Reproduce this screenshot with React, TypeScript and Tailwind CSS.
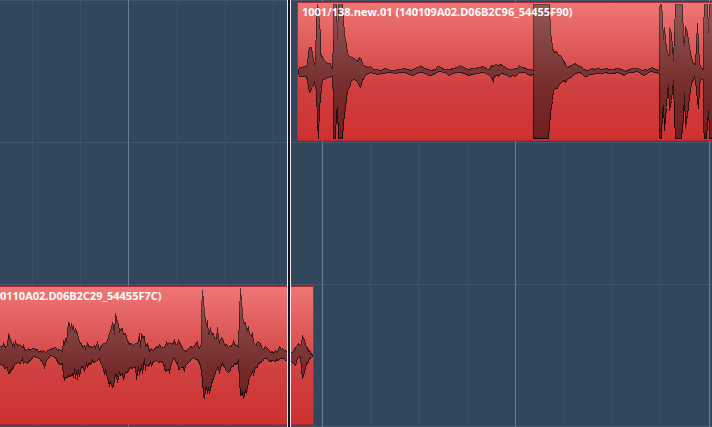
import { useId } from 'react';

type Wave = {
  viewBox: string;
  top: string;
  bottom: string;
};

// Beat widths in pixels, the first one is cut off by the left edge
const beats = [32, 48, 48, 49, 48, 48, 49, 48, 48, 49, 48, 48, 49, 48, 49, 48];

const upperWave: Wave = {
  viewBox: '298 3 414 137',
  top: `298,70 299,67 306,66 307,63 308,52 309,47 311,47 312,53 313,59 314,64 315,62 316,18 317,4 318,9 319,24 320,32 320,53
    322,57 324,60 327,63 330,63 331,68 332,68 333,38 333,4 336,4 337,38 338,4 342,4 343,20 344,33 345,40 346,43 347,53 349,56 352,57
    355,59 357,61 359,57 361,59 362,64 365,66 367,67 370,66 373,69 377,69 380,70 385,68 390,70 394,70 397,69 400,69 403,68 407,69
    411,70 414,68 417,67 418,67 420,65 424,68 428,69 431,70 435,69 437,66 439,66 442,68 445,69 449,69 453,68 457,67 460,65 463,67
    468,69 472,68 475,68 479,67 483,66 487,69 489,69 491,65 493,66 495,64 498,65 500,64 502,65 505,67 508,69 512,69 515,68 517,68
    519,65 521,67 523,67 527,69 530,69 533,70 533,4 549,4 550,33 551,37 552,48 554,52 556,51 557,52 558,55 560,55 563,60 565,64
    567,67 569,66 571,65 574,63 576,64 579,66 581,66 583,69 587,70 592,68 594,69 597,68 602,69 605,68 609,69 613,69 617,68 622,69
    625,71 629,69 632,68 637,68 642,70 645,69 647,70 651,67 655,69 659,70 659,8 660,4 661,4 662,17 663,39 664,27 665,40 667,53
    669,56 669,27 671,33 672,47 673,60 674,33 675,4 682,4 683,40 684,45 685,26 687,32 688,40 689,47 691,57 693,63 695,64 696,43
    697,23 698,43 699,63 701,68 703,69 703,30 704,4 707,4 708,32 709,4 713,4`,
  bottom: `713,138 709,138 709,130 708,110 706,138 704,138 703,127 703,79 700,78 699,87 698,108 697,100 695,80 694,77 692,81 691,83
    689,97 687,115 685,127 684,93 683,117 681,138 675,138 674,117 673,80 671,100 669,110 668,85 667,90 666,107 664,130 663,105
    662,110 661,138 659,137 659,73 655,72 650,71 647,73 644,75 640,73 637,71 632,72 629,72 626,73 624,75 620,73 617,72 613,73
    609,73 605,72 602,73 599,73 595,73 592,74 589,74 587,76 584,76 581,73 579,72 575,73 572,76 570,77 567,79 565,82 564,80 562,81
    558,85 557,88 555,88 553,90 552,100 550,113 548,138 533,138 533,74 529,75 525,72 519,72 517,74 515,76 512,75 509,77 507,75
    505,74 501,73 498,76 497,74 495,76 494,75 493,81 491,77 488,74 483,72 477,73 472,74 468,75 464,73 460,72 456,72 453,73 448,75
    445,72 438,71 435,73 433,74 430,75 428,75 423,72 418,72 413,75 408,74 405,72 401,72 395,73 389,72 383,73 377,74 370,72 365,75
    362,80 360,87 358,84 357,81 354,79 351,80 349,87 347,90 345,107 343,123 342,138 338,138 337,107 336,113 335,138 333,138 333,100
    332,76 327,77 322,80 321,88 319,107 318,138 317,123 316,90 314,82 312,87 309,92 307,80 306,76 299,76 298,73`,
};

const lowerWave: Wave = {
  viewBox: '0 287 313 137',
  top: `-2,347 0,346 2,346 3,343 5,347 7,345 8,334 9,336 11,342 12,345 13,343 14,346 15,341 16,344 18,345 19,344 22,347 23,345 24,349
    26,350 28,348 29,350 32,348 37,349 38,352 40,350 41,352 43,350 45,352 47,350 50,349 52,348 55,347 57,350 59,349 62,351 63,340
    64,343 65,338 66,342 67,332 68,322 69,323 70,330 71,323 72,328 73,326 74,332 75,329 77,333 79,342 81,343 82,347 84,345 85,348
    87,343 89,347 90,346 92,347 94,345 95,347 97,342 99,349 101,345 103,343 105,343 107,340 109,333 110,330 112,323 113,325 114,334
    115,313 116,318 117,322 118,323 119,331 120,329 122,328 123,334 125,333 127,340 129,344 131,343 133,345 135,343 137,343 138,340
    139,333 140,347 141,333 142,337 144,336 145,346 147,343 149,351 151,348 153,350 156,346 158,347 159,344 161,347 164,347 166,342
    167,344 169,342 172,344 174,340 175,344 177,344 178,340 180,344 182,348 184,350 186,351 188,348 190,346 192,347 194,345 197,341
    198,347 199,348 201,343 201,310 202,290 203,300 204,313 206,325 207,320 208,334 209,333 210,327 211,334 213,333 214,338 216,338
    217,327 218,337 219,342 221,337 223,340 224,345 226,344 228,347 230,345 231,346 233,341 235,345 237,345 238,347 239,313 240,288
    241,300 242,313 243,323 245,322 246,328 247,330 248,326 249,334 251,336 252,332 253,342 255,345 256,345 257,341 260,343 261,347
    263,349 265,346 268,349 270,352 272,351 273,353 275,350 277,352 279,346 281,349 282,348 284,350 287,351 290,353 293,351 295,347
    297,345 298,343 300,345 301,344 302,335 304,340 306,347 307,347 308,351 309,350 311,354 313,355`,
  bottom: `311,357 309,358 308,362 306,363 304,372 302,378 301,368 300,356 297,358 295,365 293,363 291,361 288,359 285,360 283,358
    280,358 278,360 276,359 275,361 272,360 270,361 268,360 266,358 264,358 262,361 258,363 257,367 255,367 253,374 252,371 251,373
    249,378 248,380 247,389 246,392 245,390 243,398 242,392 241,394 240,395 239,380 238,360 236,364 234,363 233,366 231,366 230,370
    228,372 226,370 224,367 222,363 220,367 219,373 218,367 217,367 215,372 213,378 212,380 210,388 209,393 208,387 207,393 206,386
    205,390 204,397 203,395 202,380 200,365 197,359 195,359 193,357 190,360 187,363 185,365 184,370 182,366 180,368 178,369 177,362
    176,363 174,357 171,362 169,372 168,369 165,371 163,363 160,361 158,362 156,360 153,361 151,365 150,362 148,366 145,364 145,370
    144,358 142,373 141,365 139,374 138,366 136,379 135,366 132,368 130,367 127,372 125,372 123,379 122,373 120,375 119,372 117,382
    116,374 115,373 113,386 112,387 110,382 109,385 107,377 105,370 104,374 102,365 100,363 99,358 96,361 93,362 92,360 90,364
    88,363 87,367 86,363 84,370 82,366 81,366 79,376 78,369 77,379 76,370 75,378 74,368 73,377 72,373 70,376 68,375 67,377 65,377
    64,379 63,375 62,363 60,364 58,363 56,359 55,357 50,355 48,358 46,360 44,367 42,362 39,358 36,357 33,356 30,360 28,361 27,363
    25,361 23,363 22,358 20,363 17,362 14,364 13,368 11,369 9,373 8,373 7,367 4,368 3,365 0,364 -2,364`,
};

function Waveform({ viewBox, top, bottom }: Wave) {
  const id = useId();

  return (
    <svg
      className="col-start-1 row-start-1 h-full w-full"
      viewBox={viewBox}
      preserveAspectRatio="xMinYMin meet"
      shapeRendering="crispEdges"
      aria-hidden="true"
    >
      <defs>
        <linearGradient id={`${id}-fill`} x1="0" y1="0" x2="0" y2="1">
          <stop offset="0" stopColor="#243434" stopOpacity="0.46" />
          <stop offset="1" stopColor="#0a0808" stopOpacity="0.48" />
        </linearGradient>
        <linearGradient id={`${id}-line`} x1="0" y1="0" x2="0" y2="1">
          <stop offset="0" stopColor="#1c1818" stopOpacity="0.62" />
          <stop offset="1" stopColor="#0c0404" stopOpacity="0.9" />
        </linearGradient>
      </defs>
      {/* Half a pixel in, so that the outline fills whole pixels */}
      <g transform="translate(0.5 0.5)">
        <polygon points={`${top} ${bottom}`} fill={`url(#${id}-fill)`} stroke={`url(#${id}-line)`} strokeWidth="1" />
      </g>
    </svg>
  );
}

function Lane({ children }: { children?: React.ReactNode }) {
  return <section className="flex h-[142px] shrink-0 border-t border-[#42576c] pt-px">{children}</section>;
}

const clipClass =
  'relative grid h-[139px] grid-cols-1 grid-rows-1 overflow-hidden border-[#ad2c33] bg-linear-to-b from-[#ef7676] via-[#d04040] via-60% to-[#cf3030]';

const titleClass = 'z-10 col-start-1 row-start-1 pt-px text-[11px] leading-4 font-bold whitespace-nowrap text-white';

export default function App() {
  return (
    <main className="relative flex h-screen flex-col overflow-hidden bg-[#32475b] font-['Open_Sans','Noto_Sans',sans-serif]">
      <div className="absolute inset-0 flex overflow-hidden" aria-hidden="true">
        {beats.map((width, i) => (
          <div
            key={i}
            className={`shrink-0 border-r ${i % 4 === 2 ? 'border-[#667c91]' : 'border-[#3c5167]'}`}
            style={{ width: i === 0 ? width + 1 : width }}
          />
        ))}
      </div>

      <Lane>
        <article className={`${clipClass} ml-[297px] flex-1 border-y border-l`}>
          <h2 className={`${titleClass} pl-1`}>1001/138.new.01 (140109A02.D06B2C96_54455F90)</h2>
          <Waveform {...upperWave} />
        </article>
      </Lane>
      <Lane />
      <Lane>
        <article className={`${clipClass} w-[314px] border-y border-r`}>
          <h2 className={titleClass}>0110A02.D06B2C29_54455F7C)</h2>
          <Waveform {...lowerWave} />
        </article>
      </Lane>
      <Lane />

      {/* Playhead */}
      <div className="absolute inset-y-0 left-[287px] w-1 border-x border-[#f3e6ee] bg-[#141420]" />
    </main>
  );
}
